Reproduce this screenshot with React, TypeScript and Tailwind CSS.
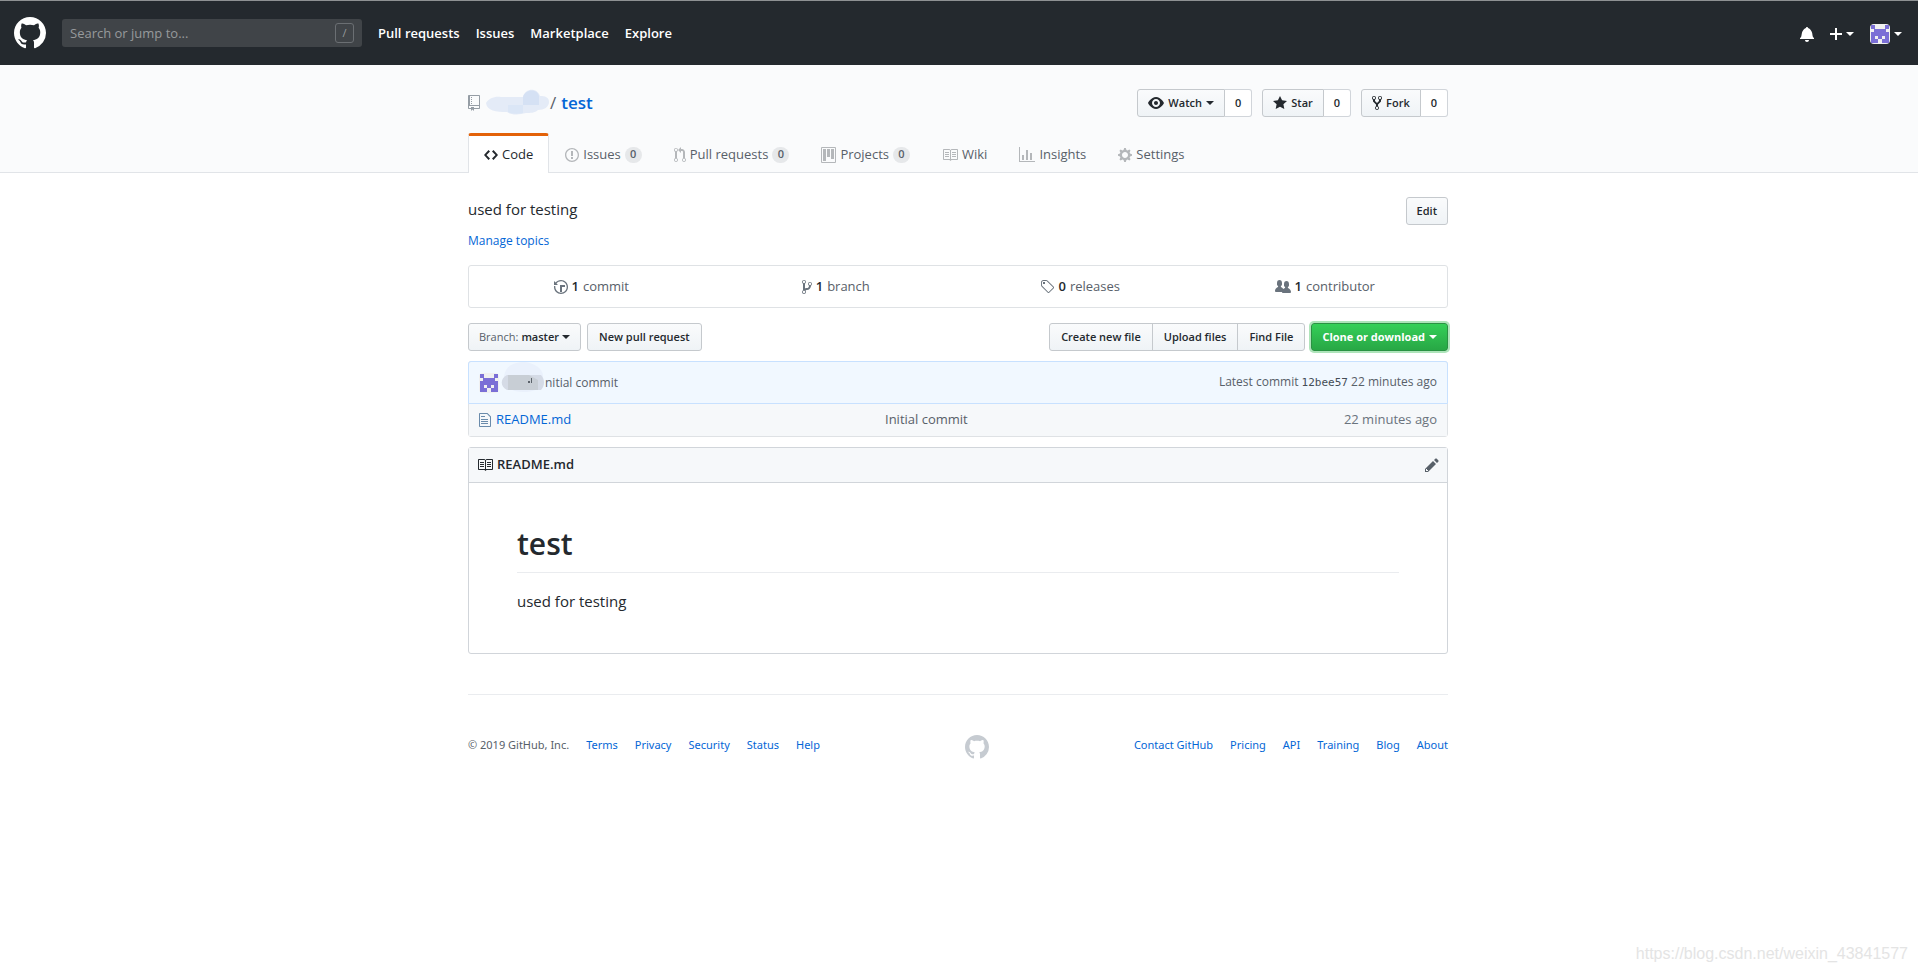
import React from 'react';
import { clsx } from 'clsx';

interface IconProps {
  name: keyof typeof paths;
  className?: string;
}

// [width, height, path]
const paths = {
  mark: [16, 16, 'M8 0C3.58 0 0 3.58 0 8c0 3.54 2.29 6.53 5.47 7.59.4.07.55-.17.55-.38 0-.19-.01-.82-.01-1.49-2.01.37-2.53-.49-2.69-.94-.09-.23-.48-.94-.82-1.13-.28-.15-.68-.52-.01-.53.63-.01 1.08.58 1.23.82.72 1.21 1.87.87 2.33.66.07-.52.28-.87.51-1.07-1.78-.2-3.64-.89-3.64-3.95 0-.87.31-1.59.82-2.15-.08-.2-.36-1.02.08-2.12 0 0 .67-.21 2.2.82.64-.18 1.32-.27 2-.27.68 0 1.36.09 2 .27 1.53-1.04 2.2-.82 2.2-.82.44 1.1.16 1.92.08 2.12.51.56.82 1.27.82 2.15 0 3.07-1.87 3.75-3.65 3.95.29.25.54.73.54 1.48 0 1.07-.01 1.93-.01 2.2 0 .21.15.46.55.38A8.013 8.013 0 0 0 16 8c0-4.42-3.58-8-8-8z'],
  bell: [14, 16, 'M14 12v1H0v-1l.73-.58c.77-.77.81-2.55 1.19-4.42C2.69 3.23 6 2 6 2c0-.55.45-1 1-1s1 .45 1 1c0 0 3.39 1.23 4.16 5 .38 1.88.42 3.66 1.19 4.42l.66.58H14zm-7 4c1.11 0 2-.89 2-2H5c0 1.11.89 2 2 2z'],
  plus: [12, 16, 'M12 9H7v5H5V9H0V7h5V2h2v5h5v2z'],
  repo: [12, 16, 'M4 9H3V8h1v1zm0-3H3v1h1V6zm0-2H3v1h1V4zm0-2H3v1h1V2zm8-1v12c0 .55-.45 1-1 1H6v2l-1.5-1.5L3 16v-2H1c-.55 0-1-.45-1-1V1c0-.55.45-1 1-1h10c.55 0 1 .45 1 1zm-1 10H1v2h2v-1h3v1h5v-2zm0-10H2v9h9V1z'],
  eye: [16, 16, 'M8.06 2C3 2 0 8 0 8s3 6 8.06 6C13 14 16 8 16 8s-3-6-7.94-6zM8 12c-2.2 0-4-1.78-4-4 0-2.2 1.8-4 4-4 2.22 0 4 1.8 4 4 0 2.22-1.78 4-4 4zm2-4c0 1.11-.89 2-2 2-1.11 0-2-.89-2-2 0-1.11.89-2 2-2 1.11 0 2 .89 2 2z'],
  star: [14, 16, 'M14 6l-4.9-.64L7 1 4.9 5.36 0 6l3.6 3.26L2.67 14 7 11.67 11.33 14l-.93-4.74L14 6z'],
  fork: [10, 16, 'M8 1a1.993 1.993 0 0 0-1 3.72V6L5 8 3 6V4.72A1.993 1.993 0 0 0 2 1a1.993 1.993 0 0 0-1 3.72V6.5l3 3v1.78A1.993 1.993 0 0 0 5 15a1.993 1.993 0 0 0 1-3.72V9.5l3-3V4.72A1.993 1.993 0 0 0 8 1zM2 4.2C1.34 4.2.8 3.65.8 3c0-.65.55-1.2 1.2-1.2.65 0 1.2.55 1.2 1.2 0 .65-.55 1.2-1.2 1.2zm3 10c-.66 0-1.2-.55-1.2-1.2 0-.65.55-1.2 1.2-1.2.65 0 1.2.55 1.2 1.2 0 .65-.55 1.2-1.2 1.2zm3-10c-.66 0-1.2-.55-1.2-1.2 0-.65.55-1.2 1.2-1.2.65 0 1.2.55 1.2 1.2 0 .65-.55 1.2-1.2 1.2z'],
  code: [14, 16, 'M9.5 3L8 4.5 11.5 8 8 11.5 9.5 13 14 8 9.5 3zm-5 0L0 8l4.5 5L6 11.5 2.5 8 6 4.5 4.5 3z'],
  issue: [14, 16, 'M7 2.3c3.14 0 5.7 2.56 5.7 5.7s-2.56 5.7-5.7 5.7A5.71 5.71 0 0 1 1.3 8c0-3.14 2.56-5.7 5.7-5.7zM7 1C3.14 1 0 4.14 0 8s3.14 7 7 7 7-3.14 7-7-3.14-7-7-7zm1 3H6v5h2V4zm0 6H6v2h2v-2z'],
  pull: [12, 16, 'M11 11.28V5c-.03-.78-.34-1.47-.94-2.06C9.46 2.35 8.78 2.03 8 2H7V0L4 3l3 3V4h1c.27.02.48.11.69.31.21.2.3.42.31.69v6.28A1.993 1.993 0 0 0 10 15a1.993 1.993 0 0 0 1-3.72zm-1 2.92c-.66 0-1.2-.55-1.2-1.2 0-.65.55-1.2 1.2-1.2.65 0 1.2.55 1.2 1.2 0 .65-.55 1.2-1.2 1.2zM4 3c0-1.11-.89-2-2-2a1.993 1.993 0 0 0-1 3.72v6.56A1.993 1.993 0 0 0 2 15a1.993 1.993 0 0 0 1-3.72V4.72c.59-.34 1-.98 1-1.72zm-.8 10c0 .66-.55 1.2-1.2 1.2-.65 0-1.2-.55-1.2-1.2 0-.65.55-1.2 1.2-1.2.65 0 1.2.55 1.2 1.2zM2 4.2C1.34 4.2.8 3.65.8 3c0-.65.55-1.2 1.2-1.2.65 0 1.2.55 1.2 1.2 0 .65-.55 1.2-1.2 1.2z'],
  project: [15, 16, 'M10 12h3V2h-3v10zm-4-2h3V2H6v8zm-4 4h3V2H2v12zm-1 1h13V1H1v14zM14 0H1a1 1 0 0 0-1 1v14a1 1 0 0 0 1 1h13a1 1 0 0 0 1-1V1a1 1 0 0 0-1-1z'],
  book: [16, 16, 'M3 5h4v1H3V5zm0 3h4V7H3v1zm0 2h4V9H3v1zm11-5h-4v1h4V5zm0 2h-4v1h4V7zm0 2h-4v1h4V9zm2-6v9c0 .55-.45 1-1 1H9.5l-1 1-1-1H2c-.55 0-1-.45-1-1V3c0-.55.45-1 1-1h5.5l1 1 1-1H15c.55 0 1 .45 1 1zm-8 .5L7.5 3H2v9h6V3.5zm7-.5H9.5l-.5.5V12h6V3z'],
  graph: [16, 16, 'M16 14v1H0V0h1v14h15zM5 13H3V8h2v5zm4 0H7V3h2v10zm4 0h-2V6h2v7z'],
  gear: [14, 16, 'M14 8.77v-1.6l-1.94-.64-.45-1.09.88-1.84-1.13-1.13-1.81.91-1.09-.45-.69-1.92h-1.6l-.63 1.94-1.11.45-1.84-.88-1.13 1.13.91 1.81-.45 1.09L0 7.23v1.59l1.94.64.45 1.09-.88 1.84 1.13 1.13 1.81-.91 1.09.45.69 1.92h1.59l.63-1.94 1.11-.45 1.84.88 1.13-1.13-.92-1.81.47-1.09L14 8.75v.02zM7 11c-1.66 0-3-1.34-3-3s1.34-3 3-3 3 1.34 3 3-1.34 3-3 3z'],
  history: [14, 16, 'M8 13H6V6h5v2H8v5zM7 1C4.81 1 2.87 2.02 1.59 3.59L0 2v4h4L2.5 4.5C3.55 3.17 5.17 2.3 7 2.3c3.14 0 5.7 2.56 5.7 5.7s-2.56 5.7-5.7 5.7A5.71 5.71 0 0 1 1.3 8c0-.34.03-.67.09-1H.08C.03 7.33 0 7.66 0 8c0 3.86 3.14 7 7 7s7-3.14 7-7-3.14-7-7-7z'],
  branch: [10, 16, 'M10 5c0-1.11-.89-2-2-2a1.993 1.993 0 0 0-1 3.72v.3c-.02.52-.23.98-.63 1.38-.4.4-.86.61-1.38.63-.83.02-1.48.16-2 .45V4.72a1.993 1.993 0 0 0-1-3.72C.88 1 0 1.89 0 3a2 2 0 0 0 1 1.72v6.56c-.59.35-1 .99-1 1.72 0 1.11.89 2 2 2 1.11 0 2-.89 2-2 0-.53-.2-1-.53-1.36.09-.06.48-.41.59-.47.25-.11.56-.17.94-.17 1.05-.05 1.95-.45 2.75-1.25S8.95 7.77 9 6.73h-.02C9.59 6.37 10 5.73 10 5zM2 1.8c.66 0 1.2.55 1.2 1.2 0 .65-.55 1.2-1.2 1.2C1.35 4.2.8 3.65.8 3c0-.65.55-1.2 1.2-1.2zm0 12.41c-.66 0-1.2-.55-1.2-1.2 0-.65.55-1.2 1.2-1.2.65 0 1.2.55 1.2 1.2 0 .65-.55 1.2-1.2 1.2zm6-8c-.66 0-1.2-.55-1.2-1.2 0-.65.55-1.2 1.2-1.2.65 0 1.2.55 1.2 1.2 0 .65-.55 1.2-1.2 1.2z'],
  tag: [14, 16, 'M7.73 1.73C7.26 1.26 6.62 1 5.96 1H3.5C2.13 1 1 2.13 1 3.5v2.47c0 .66.27 1.3.73 1.77l6.06 6.06c.39.39 1.02.39 1.41 0l4.59-4.59a.996.996 0 0 0 0-1.41L7.73 1.73zM2.38 7.09c-.31-.3-.47-.7-.47-1.13V3.5c0-.88.72-1.59 1.59-1.59h2.47c.42 0 .83.16 1.13.47l6.14 6.13-4.73 4.73-6.13-6.15zM3.01 3h2v2H3V3h.01z'],
  people: [16, 16, 'M16 12.999c0 .439-.45 1-1 1H7.995c-.539 0-.994-.447-.995-.999H1c-.54 0-1-.561-1-1 0-2.634 3-4 3-4s.229-.409 0-1c-.841-.621-1.058-.59-1-3 .058-2.419 1.367-3 2.5-3s2.442.58 2.5 3c.058 2.41-.159 2.379-1 3-.229.59 0 1 0 1s1.549.711 2.42 2.088C9.196 9.369 10 8.999 10 8.999s.229-.409 0-1c-.841-.62-1.058-.59-1-3 .058-2.419 1.367-3 2.5-3s2.437.581 2.495 3c.059 2.41-.158 2.38-1 3-.229.59 0 1 0 1s3.005 1.366 3.005 4'],
  file: [12, 16, 'M6 5H2V4h4v1zM2 8h7V7H2v1zm0 2h7V9H2v1zm0 2h7v-1H2v1zm10-7.5V14c0 .55-.45 1-1 1H1c-.55 0-1-.45-1-1V2c0-.55.45-1 1-1h7.5L12 4.5zM11 5L8 2H1v12h10V5z'],
  pencil: [14, 16, 'M0 12v3h3l8-8-3-3-8 8zm3 2H1v-2h1v1h1v1zm10.3-9.3L12 6 9 3l1.3-1.3a.996.996 0 0 1 1.41 0l1.59 1.59c.39.39.39 1.02 0 1.41z'],
} as const;

function Icon({ name, className }: IconProps) {
  const [w, h, d] = paths[name];
  return (
    <svg viewBox={`0 0 ${w} ${h}`} width={w} height={h} fill="currentColor" aria-hidden="true" className={clsx('shrink-0', className)}>
      <path fillRule="evenodd" d={d} />
    </svg>
  );
}

function Caret() {
  return <span className="inline-block border-x-4 border-t-4 border-x-transparent border-t-current" />;
}

function Avatar({ className }: { className?: string }) {
  return (
    <svg viewBox="0 0 20 20" className={clsx('shrink-0 rounded-sm', className)} aria-hidden="true">
      <rect width="20" height="20" fill="#f0f0f0" />
      <path fill="#7b6fd6" d="M1 1h4v4h10V1h4v4h-3v3h3v11H1V8h3V5H1z" />
      <path fill="#f0f0f0" d="M5 12h3v3H5zM12 12h3v3h-3zM8 15h4v4H8z" />
    </svg>
  );
}

const btn =
  'inline-flex h-7 items-center whitespace-nowrap border border-[#c5c9cd] bg-gradient-to-b from-[#fafbfc] to-[#eff3f6] text-[11px] font-semibold text-[#24292e]';

function SocialButton({ icon, label, caret }: { icon: IconProps['name']; label: string; caret?: boolean }) {
  return (
    <div className="flex">
      <button className={clsx(btn, 'gap-1 rounded-l-[3px] px-[10px]')}>
        <Icon name={icon} />
        {label}
        {caret && <Caret />}
      </button>
      <a href="#" className="flex h-7 items-center rounded-r-[3px] border border-l-0 border-[#d1d5da] bg-white px-[10px] text-[11px] font-semibold">
        0
      </a>
    </div>
  );
}

const tabs: { icon: IconProps['name']; label: string; count?: number }[] = [
  { icon: 'issue', label: 'Issues', count: 0 },
  { icon: 'pull', label: 'Pull requests', count: 0 },
  { icon: 'project', label: 'Projects', count: 0 },
  { icon: 'book', label: 'Wiki' },
  { icon: 'graph', label: 'Insights' },
  { icon: 'gear', label: 'Settings' },
];

const stats: { icon: IconProps['name']; count: number; label: string }[] = [
  { icon: 'history', count: 1, label: 'commit' },
  { icon: 'branch', count: 1, label: 'branch' },
  { icon: 'tag', count: 0, label: 'releases' },
  { icon: 'people', count: 1, label: 'contributor' },
];

function Header() {
  return (
    <header className="flex h-[65px] items-center border-t border-[#8e9193] bg-[#24292e] pr-4 pl-[14px] text-white">
      <a href="#" aria-label="Homepage">
        <Icon name="mark" className="h-8 w-8" />
      </a>
      <div className="relative ml-4 w-[300px]">
        <input
          type="text"
          aria-label="Search or jump to"
          placeholder="Search or jump to..."
          className="block h-7 w-full rounded-[3px] bg-[#404448] px-2 text-[13px] placeholder:text-[#979a9c]"
        />
        <span className="absolute top-1 right-2 flex h-5 w-[19px] items-center justify-center rounded-[3px] border border-[#6b6f73] text-[11px] text-[#979a9c]">/</span>
      </div>
      <nav className="ml-4 flex gap-4 pt-[2px] text-[13px] font-semibold">
        <a href="#">Pull requests</a>
        <a href="#">Issues</a>
        <a href="#">Marketplace</a>
        <a href="#">Explore</a>
      </nav>
      <div className="ml-auto flex items-center gap-4 pt-[2px]">
        <button aria-label="Notifications">
          <Icon name="bell" />
        </button>
        <button aria-label="Create new" className="flex items-center gap-1">
          <Icon name="plus" />
          <Caret />
        </button>
        <button aria-label="Account" className="flex items-center gap-1">
          <Avatar className="h-5 w-5" />
          <Caret />
        </button>
      </div>
    </header>
  );
}

function RepoHead() {
  return (
    <div className="border-b border-[#e1e4e8] bg-[#fafbfc] pt-6">
      <div className="mx-auto w-full max-w-[982px] pr-[2px]">
        <div className="flex h-7 justify-between">
          <h1 className="flex items-center text-[17px]">
            <Icon name="repo" className="text-[#959da5]" />
            <svg width="66" height="28" viewBox="0 0 66 28" className="ml-1" aria-hidden="true">
              <path fill="#e4ebf7" d="M2 14c3-5 9-7 15-6h22c2-9 14-10 17-1 5 0 9 1 9 6s-5 8-11 8c-3 3-8 3-12 3-7 2-15 2-19-1C12 23 3 22 2 14z" />
              <path fill="#d5e1f4" d="M39 8c2-8 14-9 16-1v9H39z" />
              <path fill="#dbe6f6" d="M24 16h15v8c-6 1-12 1-15-1z" />
            </svg>
            <span className="mr-[5px] text-[#586069]">/</span>
            <a href="#" className="font-semibold text-[#0366d6]">test</a>
          </h1>
          <div className="flex gap-[10px]">
            <SocialButton icon="eye" label="Watch" caret />
            <SocialButton icon="star" label="Star" />
            <SocialButton icon="fork" label="Fork" />
          </div>
        </div>
        <nav className="mt-4 -mb-px flex text-[13px] text-[#586069]">
          <a href="#" className="flex h-10 items-center gap-1 rounded-t-[3px] border-x border-t-[3px] border-x-[#e1e4e8] border-t-[#e36209] bg-white px-[15px] text-[#24292e]">
            <Icon name="code" />
            Code
          </a>
          {tabs.map(t => (
            <a key={t.label} href="#" className="flex h-10 items-center gap-1 px-4 pt-[3px]">
              <Icon name={t.icon} className="text-[#b4b7ba]" />
              {t.label}
              {t.count !== undefined && (
                <span className="flex h-4 w-[17px] items-center justify-center rounded-full bg-[#e6e8ea] text-[11px] font-semibold">{t.count}</span>
              )}
            </a>
          ))}
        </nav>
      </div>
    </div>
  );
}

function Files() {
  return (
    <div className="mt-[10px] rounded-[3px] border border-[#dfe2e5]">
      <div className="-mx-px -mt-px flex h-[43px] items-center justify-between rounded-t-[3px] border border-[#c8e1ff] bg-[#f1f8ff] px-[10px] text-[12px] text-[#586069]">
        <div className="flex items-center">
          <Avatar className="h-5 w-5" />
          <svg width="44" height="41" viewBox="0 0 44 41" className="ml-[2px]" aria-hidden="true">
            <path fill="#eaf1fc" d="M3 14C5 4 12 1 20 0c9-1 21 5 22 13v11c-10 8-30 8-37 0z" />
            <path fill="#d5dbe6" d="M6 13h34c4 4 4 11 0 15H6c-7-3-7-12 0-15z" />
            <path fill="#c8ced5" d="M7 13h21l9 5v10H7z" />
            <path fill="#5b626a" d="M27 19h2v2h-2zM30 16h1v5h-1z" />
          </svg>
          <a href="#">nitial commit</a>
        </div>
        <p>
          Latest commit <a href="#" className="font-['DejaVu_Sans_Mono',monospace] text-[11px] text-[#444d56]">12bee57</a> 22 minutes ago
        </p>
      </div>
      <table className="w-full table-fixed bg-[#f6f8fa] text-[13px]">
        <tbody>
          <tr className="h-8">
            <td className="w-[416px] pl-[10px]">
              <a href="#" className="flex items-center gap-[5px] text-[#0366d6]">
                <Icon name="file" className="text-[#6a8bab]" />
                README.md
              </a>
            </td>
            <td className="text-[#586069]">Initial commit</td>
            <td className="pr-[10px] text-right text-[#6a737d]">22 minutes ago</td>
          </tr>
        </tbody>
      </table>
    </div>
  );
}

function Footer() {
  return (
    <footer className="mt-10 flex items-start justify-between border-t border-[#eaecef] pt-10 font-['Noto_Sans','Open_Sans',sans-serif] text-[11px] text-[#586069]">
      <div className="flex w-[400px] gap-[17px] leading-5">
        <span>© 2019 GitHub, Inc.</span>
        {['Terms', 'Privacy', 'Security', 'Status', 'Help'].map(l => (
          <a key={l} href="#" className="text-[#0366d6]">{l}</a>
        ))}
      </div>
      <Icon name="mark" className="h-6 w-6 text-[#c6cbd1]" />
      <div className="flex w-[362px] justify-end gap-[17px] leading-5">
        {['Contact GitHub', 'Pricing', 'API', 'Training', 'Blog', 'About'].map(l => (
          <a key={l} href="#" className="text-[#0366d6]">{l}</a>
        ))}
      </div>
    </footer>
  );
}

export default function App() {
  return (
    <div className="relative flex min-h-screen flex-col bg-white font-['Open_Sans','Noto_Sans',sans-serif] text-[#24292e]">
      <Header />
      <RepoHead />

      <main className="mx-auto w-full max-w-[982px] pt-6 pr-[2px]">
        <div className="flex items-start justify-between">
          <div>
            <p className="text-[15px] leading-6">used for testing</p>
            <a href="#" className="mt-2 block text-[12px] leading-6 text-[#0366d6]">Manage topics</a>
          </div>
          <button className={clsx(btn, 'rounded-[3px] px-[10px]')}>Edit</button>
        </div>

        <ul className="mt-3 grid h-[43px] grid-cols-4 items-center rounded-[3px] border border-[#dfe2e5] text-[13px] text-[#586069]">
          {stats.map(s => (
            <li key={s.label}>
              <a href="#" className="flex items-center justify-center gap-1">
                <Icon name={s.icon} className="text-[#6a737d]" />
                <span className="font-semibold text-[#24292e]">{s.count}</span>
                {s.label}
              </a>
            </li>
          ))}
        </ul>

        <div className="mt-[15px] flex">
          <button className={clsx(btn, 'gap-[3px] rounded-[3px] px-[10px]')}>
            <span className="font-medium text-[#586069]">Branch:</span> master
            <Caret />
          </button>
          <button className={clsx(btn, 'ml-[6px] rounded-[3px] px-[11px]')}>New pull request</button>
          <div className="ml-auto flex">
            <button className={clsx(btn, 'rounded-l-[3px] px-[11px]')}>Create new file</button>
            <button className={clsx(btn, '-ml-px px-[11px]')}>Upload files</button>
            <button className={clsx(btn, '-ml-px rounded-r-[3px] px-[11px]')}>Find File</button>
          </div>
          <button className="ml-[6px] inline-flex h-7 items-center gap-1 rounded-[3px] border border-[#2a9243] bg-gradient-to-b from-[#34d058] to-[#28a745] px-[10px] text-[11px] font-bold text-white ring-2 ring-[#aee4ba]">
            Clone or download
            <Caret />
          </button>
        </div>

        <Files />

        <section className="mt-[10px] rounded-[3px] border border-[#d1d5da]">
          <div className="flex h-[35px] items-center justify-between border-b border-[#d1d5da] bg-[#f6f8fa] px-2">
            <h3 className="flex items-center gap-1 text-[13px] font-semibold">
              <Icon name="book" />
              README.md
            </h3>
            <button aria-label="Edit this file" className="text-[#586069]">
              <Icon name="pencil" />
            </button>
          </div>
          <article className="px-12 pt-[41px] pb-10">
            <h1 className="border-b border-[#eaecef] pb-2 text-[30px] leading-10 font-semibold">test</h1>
            <p className="mt-4 text-[15px] leading-6">used for testing</p>
          </article>
        </section>

        <Footer />
      </main>

      <p className="absolute right-[10px] bottom-[7px] font-['Liberation_Sans',sans-serif] text-[16px] leading-6 text-[#e4e4e4]">
        https://blog.csdn.net/weixin_43841577
      </p>
    </div>
  );
}
